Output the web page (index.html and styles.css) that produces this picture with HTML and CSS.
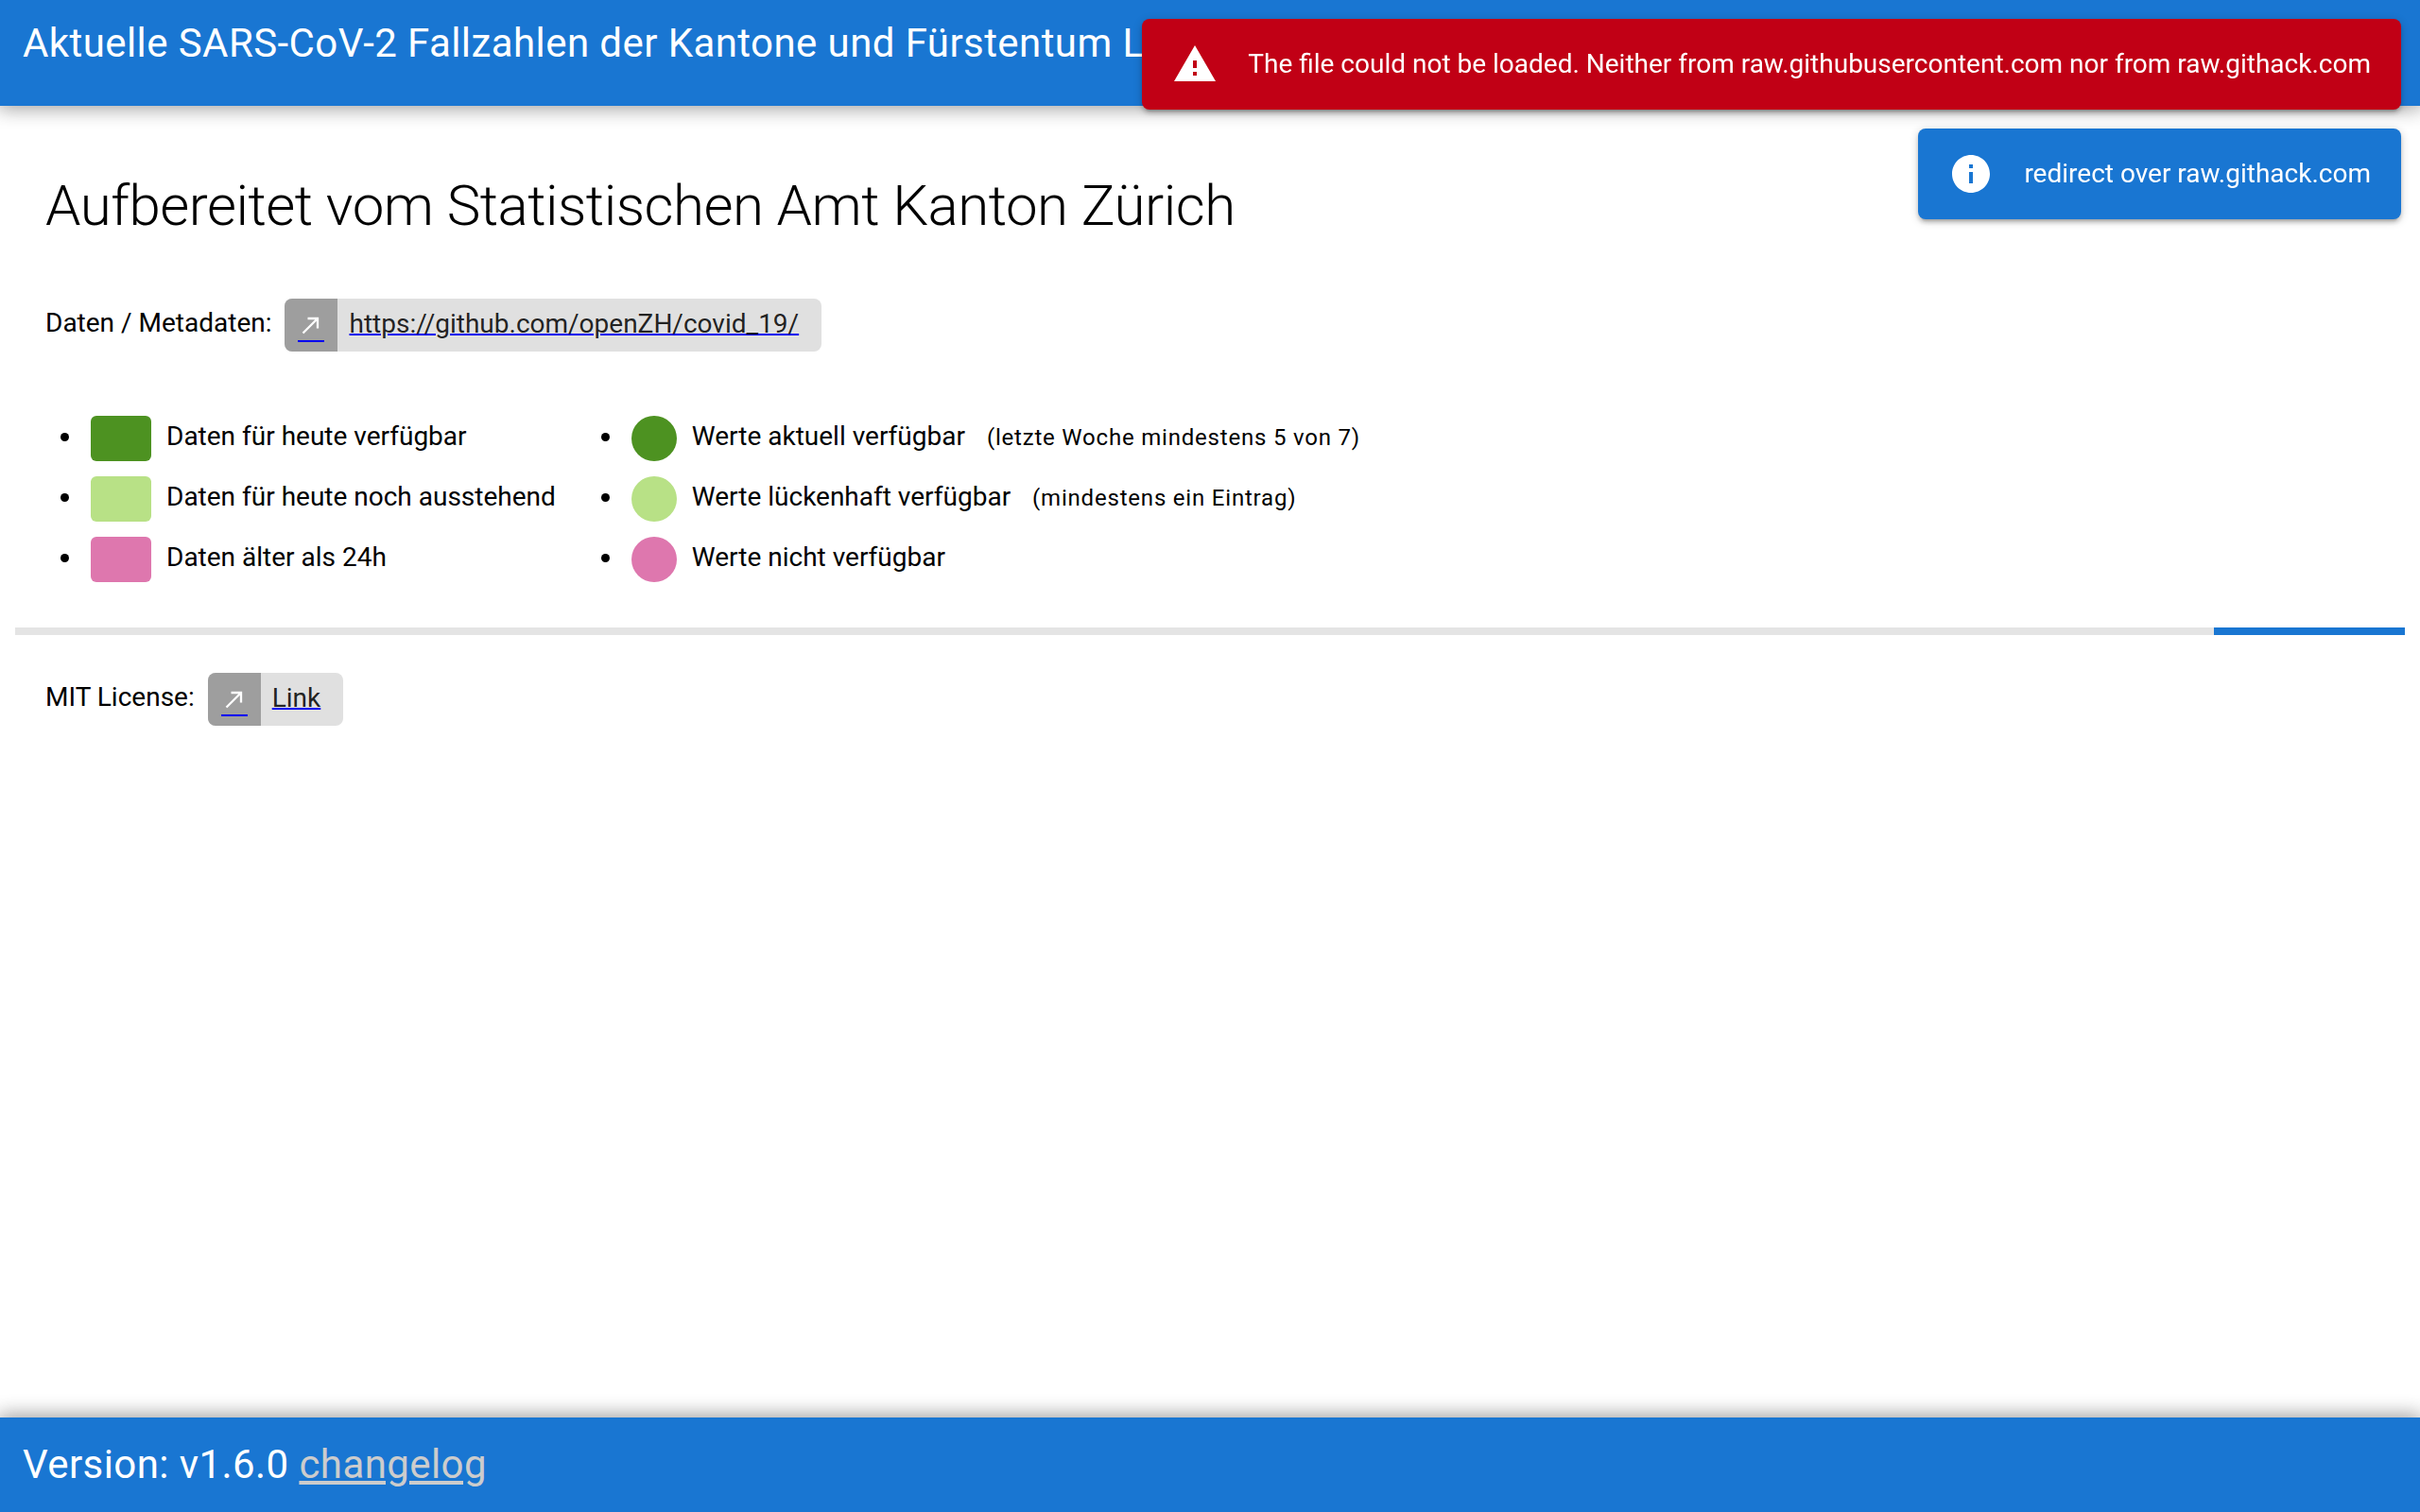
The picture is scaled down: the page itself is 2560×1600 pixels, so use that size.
FILE: index.html
```
<!DOCTYPE html>
<html lang="de">
<head>
<meta charset="utf-8">
<meta name="viewport" content="width=device-width, initial-scale=1">
<title>Aktuelle SARS-CoV-2 Fallzahlen</title>
<link rel="stylesheet" href="styles.css">
</head>
<body>
<header class="header">
  <div class="toolbar-title">Aktuelle SARS-CoV-2 Fallzahlen der Kantone und Fürstentum Liechtenstein</div>
</header>

<main class="page">
  <h1 class="title">Aufbereitet vom Statistischen Amt Kanton Zürich</h1>

  <div class="link-row">
    <span>Daten / Metadaten:</span>
    <a class="chip" href="https://github.com/openZH/covid_19/">
      <span class="chip-avatar"><svg class="chip-icon" viewBox="0 0 24 24" aria-hidden="true"><path d="M9 5v2h6.59L4 18.59 5.41 20 17 8.41V15h2V5z"/></svg></span>
      <span class="chip-label">https://github.com/openZH/covid_19/</span>
    </a>
  </div>

  <div class="legends">
    <ul class="legend">
      <li class="legend-item"><span class="swatch current"></span>Daten für heute verfügbar</li>
      <li class="legend-item"><span class="swatch partial"></span>Daten für heute noch ausstehend</li>
      <li class="legend-item"><span class="swatch missing"></span>Daten älter als 24h</li>
    </ul>
    <ul class="legend">
      <li class="legend-item"><span class="swatch round current"></span>Werte aktuell verfügbar <span class="caption">(letzte Woche mindestens 5 von 7)</span></li>
      <li class="legend-item"><span class="swatch round partial"></span>Werte lückenhaft verfügbar <span class="caption">(mindestens ein Eintrag)</span></li>
      <li class="legend-item"><span class="swatch round missing"></span>Werte nicht verfügbar</li>
    </ul>
  </div>

  <div class="progress" role="progressbar" aria-label="Daten werden geladen"><div class="progress-bar"></div></div>

  <div class="link-row">
    <span>MIT License:</span>
    <a class="chip" href="#license">
      <span class="chip-avatar"><svg class="chip-icon" viewBox="0 0 24 24" aria-hidden="true"><path d="M9 5v2h6.59L4 18.59 5.41 20 17 8.41V15h2V5z"/></svg></span>
      <span class="chip-label">Link</span>
    </a>
  </div>
</main>

<footer class="footer">
  <div class="toolbar-title">Version: v1.6.0 <a class="changelog" href="#changelog">changelog</a></div>
</footer>

<div class="notifications">
  <div class="notification negative" role="alert">
    <svg class="notification-icon" viewBox="0 0 24 24" aria-hidden="true"><path d="M1 21h22L12 2 1 21zm12-3h-2v-2h2v2zm0-4h-2v-4h2v4z"/></svg>
    <span>The file could not be loaded. Neither from raw.githubusercontent.com nor from raw.githack.com</span>
  </div>
  <div class="notification info" role="status">
    <svg class="notification-icon" viewBox="0 0 24 24" aria-hidden="true"><path d="M12 2C6.48 2 2 6.48 2 12s4.48 10 10 10 10-4.48 10-10S17.52 2 12 2zm1 15h-2v-6h2v6zm0-8h-2V7h2v2z"/></svg>
    <span>redirect over raw.githack.com</span>
  </div>
</div>
</body>
</html>
```
FILE: styles.css
```
:root {
  --primary: #1976d2;
  --negative: #c10015;
}

* {
  box-sizing: border-box;
}

body {
  margin: 0;
  min-height: 100vh;
  display: flex;
  flex-direction: column;
  background: #fff;
  color: #000;
  font-family: Roboto, "Liberation Sans", sans-serif;
  font-size: 28px;
  line-height: 42px;
}

.header,
.footer {
  background: var(--primary);
  color: #fff;
  box-shadow: 0 0 20px 4px rgba(0, 0, 0, 0.2), 0 0 20px rgba(0, 0, 0, 0.24);
}

.header {
  padding: 14px 24px 34px;
}

.footer {
  padding: 18px 24px;
}

.toolbar-title {
  font-size: 42px;
  line-height: 64px;
  letter-spacing: 0.01em;
  white-space: nowrap;
  overflow: hidden;
}

.changelog {
  color: #ccc;
}

.page {
  flex: 1;
  padding: 56px 16px;
}

.title {
  margin: 0 32px 48px;
  font-size: 60px;
  font-weight: 300;
  line-height: 100px;
  letter-spacing: -0.00833em;
}

.link-row {
  display: flex;
  align-items: center;
  gap: 14px;
  margin: 0 32px;
}

.link-row > span {
  padding-bottom: 4px;
}

.chip {
  display: flex;
  height: 56px;
  padding-right: 24px;
  gap: 12px;
  overflow: hidden;
  border-radius: 8px;
  background: #e0e0e0;
  text-decoration: none;
}

.chip-avatar {
  display: flex;
  align-items: center;
  justify-content: center;
  width: 56px;
  padding-top: 4px;
  background: #9e9e9e;
}

.chip-icon {
  width: 28px;
  height: 32px;
  padding-bottom: 2px;
  border-bottom: 2px solid #0000ee;
  fill: #fff;
}

.chip-label {
  align-self: center;
  padding-bottom: 2px;
  color: rgba(0, 0, 0, 0.87);
  text-decoration: underline 2px #0000ee;
}

.legends {
  display: flex;
  gap: 32px;
  margin: 68px 32px 48px;
}

.legend {
  display: grid;
  gap: 16px;
  margin: 0;
  padding-left: 40px;
}

.legend-item {
  height: 48px;
  padding-left: 8px;
  line-height: 44px;
}

.swatch {
  float: left;
  width: 64px;
  height: 48px;
  margin-right: 16px;
  border-radius: 6px;
}

.swatch.round {
  width: 48px;
  border-radius: 50%;
}

.current {
  background: #4d9221;
}

.partial {
  background: #b8e186;
}

.missing {
  background: #de77ae;
}

.caption {
  margin-left: 16px;
  font-size: 24px;
  letter-spacing: 0.03333em;
}

.progress {
  display: flex;
  justify-content: flex-end;
  height: 8px;
  margin-bottom: 40px;
  background: #e4e4e4;
}

.progress-bar {
  width: 8%;
  background: var(--primary);
}

.notifications {
  position: fixed;
  top: 20px;
  right: 20px;
  display: flex;
  flex-direction: column;
  align-items: flex-end;
  gap: 20px;
}

.notification {
  display: flex;
  align-items: center;
  gap: 32px;
  min-height: 96px;
  padding: 0 32px;
  border-radius: 8px;
  color: #fff;
  box-shadow: 0 2px 10px rgba(0, 0, 0, 0.2), 0 4px 4px rgba(0, 0, 0, 0.14), 0 6px 2px -4px rgba(0, 0, 0, 0.12);
}

.notification.negative {
  background: var(--negative);
}

.notification.info {
  background: var(--primary);
}

.notification-icon {
  width: 48px;
  height: 48px;
  fill: currentColor;
}
```
